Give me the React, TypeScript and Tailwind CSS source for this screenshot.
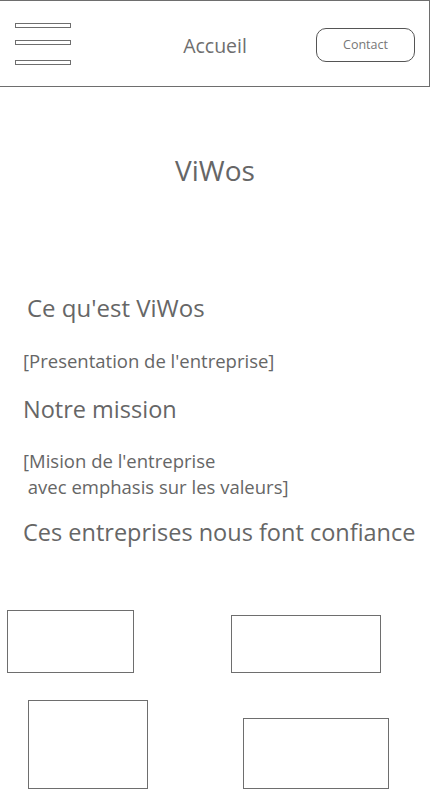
import React from "react";

const page = () => {
  return (
    <div className="w-[430px] min-h-[812px] bg-white text-[#666666] font-['Open_Sans',sans-serif]">
      {/* header */}
      <div className="flex items-start h-[87px] border-t border-r border-b border-[#6e6e6e]">
        <div className="flex-1 flex flex-col pl-[15px] pt-[22px]">
          <span className="block w-[56px] h-[5px] border border-[#6e6e6e]" />
          <span className="block w-[56px] h-[5px] border border-[#6e6e6e] mt-[12px]" />
          <span className="block w-[56px] h-[5px] border border-[#6e6e6e] mt-[15px]" />
        </div>
        <p className="text-[19.5px] mt-[30px] text-[#6e6e6e]">Accueil</p>
        <div className="flex-1 flex justify-end pr-[14px] pt-[27px]">
          <button className="w-[99px] h-[34px] rounded-[10px] border border-[#555555] text-[12.5px] text-[#777777]">
            Contact
          </button>
        </div>
      </div>

      {/* title */}
      <h1 className="text-center text-[28px] mt-[62px]">ViWos</h1>

      {/* presentation */}
      <h2 className="text-[24px] pl-[27px] mt-[99px]">Ce qu'est ViWos</h2>
      <p className="text-[18.5px] pl-[23px] mt-[21px]">[Presentation de l'entreprise]</p>

      {/* mission */}
      <h2 className="text-[23.5px] pl-[23px] mt-[17px]">Notre mission</h2>
      <p className="text-[18.5px] leading-[26px] pl-[23px] mt-[21px] whitespace-pre">
        {"[Mision de l'entreprise\n avec emphasis sur les valeurs]"}
      </p>

      <h2 className="text-[23.5px] pl-[23px] mt-[15px]">Ces entreprises nous font confiance</h2>

      {/* logos */}
      <div className="flex items-start mt-[60px]">
        <div className="ml-[7px] w-[127px] h-[63px] border border-[#6e6e6e]" />
        <div className="ml-[97px] mt-[5px] w-[150px] h-[58px] border border-[#6e6e6e]" />
      </div>
      <div className="flex items-start mt-[27px]">
        <div className="ml-[28px] w-[120px] h-[89px] border border-[#6e6e6e]" />
        <div className="ml-[95px] mt-[18px] w-[146px] h-[71px] border border-[#6e6e6e]" />
      </div>
    </div>
  );
};

export default page;
